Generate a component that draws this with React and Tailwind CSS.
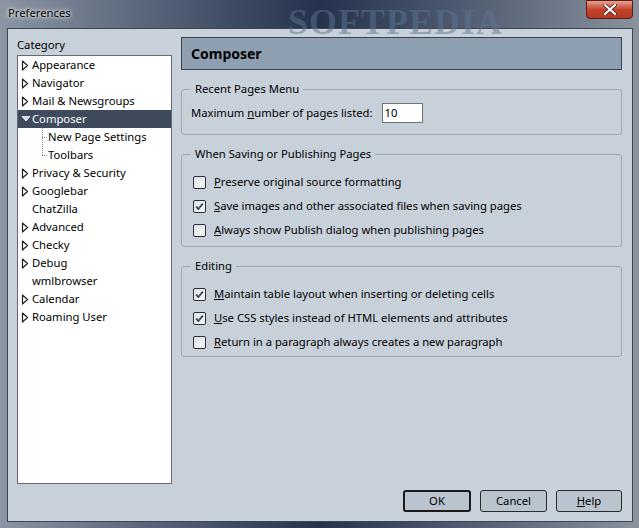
import React from "react";

const font = { fontFamily: '"Noto Sans", "Open Sans", sans-serif' };

function TriRight() {
  return (
    <svg width="8" height="11" viewBox="0 0 8 11" className="shrink-0">
      <path d="M1.5 1 L6.5 5.5 L1.5 10 Z" fill="white" stroke="#222" strokeWidth="1.2" strokeLinejoin="round" />
    </svg>
  );
}
function TriDown() {
  return (
    <svg width="10" height="8" viewBox="0 0 10 8" className="shrink-0">
      <path d="M1 1.5 L9 1.5 L5 6 Z" fill="#dfe3e8" stroke="#eef" strokeWidth="0.8" strokeLinejoin="round" />
    </svg>
  );
}

function TreeRow({ label, expand, selected }) {
  return (
    <div
      className={
        "flex items-center h-[18px] text-[11.25px] leading-[18px] " +
        (selected ? "bg-[#3f4b5c] text-white" : "text-black")
      }
    >
      <div className="w-[14px] pl-[3px] flex items-center">
        {expand === "right" && <TriRight />}
        {expand === "down" && <TriDown />}
      </div>
      <span>{label}</span>
    </div>
  );
}

function Check({ checked }) {
  return (
    <div className="w-[13px] h-[13px] border border-[#2c2f36] rounded-[2px] bg-gradient-to-br from-[#dfe4ea] to-[#f6f8fa] flex items-center justify-center shrink-0">
      {checked && (
        <svg width="9" height="9" viewBox="0 0 9 9">
          <path d="M1.2 4.6 L3.4 7 L7.8 1.6" fill="none" stroke="#3a3f48" strokeWidth="1.7" />
        </svg>
      )}
    </div>
  );
}

function CheckRow({ checked, first, rest }) {
  return (
    <div className="flex items-center h-[24px] pl-[11px] gap-[8px] text-[11.25px] text-black">
      <Check checked={checked} />
      <span>
        <span className="underline">{first}</span>
        {rest}
      </span>
    </div>
  );
}

function Group({ title, children, cls }) {
  return (
    <fieldset className={"border border-[#9ea7b2] rounded-[3px] px-0 " + cls}>
      <legend className="ml-[9px] px-[4px] text-[11.25px] leading-[16px] text-black">{title}</legend>
      {children}
    </fieldset>
  );
}

function Btn({ children, def, w }) {
  return (
    <div
      className={
        "h-[22px] rounded-[3px] bg-[#b9c4cf] flex items-center justify-center text-[11.25px] text-black " +
        (def ? "border-2 border-[#1a1a1a] " : "border border-[#2a2a2a] ") +
        w
      }
    >
      {children}
    </div>
  );
}

export default function App() {
  return (
    <div
      style={font}
      className="relative w-[639px] h-[528px] overflow-hidden flex flex-col bg-gradient-to-r from-[#8b95a3] via-[#24324c] to-[#8a929e]"
    >
      {/* title bar */}
      <div className="relative h-[28px] flex items-start shrink-0">
        <div className="absolute left-[288px] top-[-5px] text-[36px] font-bold text-[#5d7490] opacity-50 tracking-[1px] blur-[0.6px]" style={{ fontFamily: '"Liberation Serif", serif' }}>
          SOFTPEDIA
        </div>
        <div className="pl-[8px] pt-[5px] text-[11.25px] text-black [text-shadow:0_0_6px_#fff,0_0_3px_#fff]">Preferences</div>
        <div className="ml-auto mr-[6px] w-[47px] h-[19px] rounded-b-[4px] border border-[#5a1c14] bg-gradient-to-b from-[#e6a08f] via-[#c2432c] to-[#b53a22] flex items-center justify-center">
          <svg width="14" height="11" viewBox="0 0 14 11">
            <path d="M2 1 L12 10 M12 1 L2 10" stroke="#3a1510" strokeWidth="3.6" strokeLinecap="square" />
            <path d="M2 1 L12 10 M12 1 L2 10" stroke="white" strokeWidth="2.2" strokeLinecap="square" />
          </svg>
        </div>
      </div>

      {/* client area */}
      <div className="ml-[7px] w-[626px] h-[494px] border border-[#3f4753] bg-[#c8d0da] flex flex-col shrink-0">
        <div className="flex h-[455px]">
          {/* left column */}
          <div className="ml-[9px] w-[155px] flex flex-col">
            <div className="pt-[8px] h-[26px] text-[11.25px] leading-[16px] text-black">Category</div>
            <div className="flex-1 bg-white border border-[#646872] mt-0 h-[430px]">
              <TreeRow label="Appearance" expand="right" />
              <TreeRow label="Navigator" expand="right" />
              <TreeRow label="Mail & Newsgroups" expand="right" />
              <TreeRow label="Composer" expand="down" selected />
              <div className="relative">
                <div className="absolute left-[24px] top-0 h-[27px] border-l border-dotted border-[#888]" />
                <div className="flex items-center h-[18px] text-[11.25px]">
                  <div className="w-[24px]" />
                  <div className="w-[5px] border-t border-dotted border-[#888] mr-[1px]" />
                  <span>New Page Settings</span>
                </div>
                <div className="flex items-center h-[18px] text-[11.25px]">
                  <div className="w-[24px]" />
                  <div className="w-[5px] border-t border-dotted border-[#888] mr-[1px]" />
                  <span>Toolbars</span>
                </div>
              </div>
              <TreeRow label="Privacy & Security" expand="right" />
              <TreeRow label="Googlebar" expand="right" />
              <TreeRow label="ChatZilla" />
              <TreeRow label="Advanced" expand="right" />
              <TreeRow label="Checky" expand="right" />
              <TreeRow label="Debug" expand="right" />
              <TreeRow label="wmlbrowser" />
              <TreeRow label="Calendar" expand="right" />
              <TreeRow label="Roaming User" expand="right" />
            </div>
          </div>

          {/* right column */}
          <div className="ml-[9px] w-[441px] pt-[8px] flex flex-col">
            <div className="h-[33px] border border-[#3c4450] bg-[#8e9fb1] flex items-center pl-[9px] text-[14px] font-bold text-black">
              Composer
            </div>
            <Group title="Recent Pages Menu" cls="mt-[11px] h-[54px]">
              <div className="flex items-center h-[26px] pl-[9px] text-[11.25px] text-black mt-[3px]">
                <span>
                  Maximum <span className="underline">n</span>umber of pages listed:
                </span>
                <div className="ml-[9px] w-[41px] h-[20px] bg-white border border-[#6e737b] pl-[2px] text-[11.25px] leading-[18px]">10</div>
              </div>
            </Group>
            <Group title="When Saving or Publishing Pages" cls="mt-[11px] h-[101px]">
              <div className="pt-[8px]">
                <CheckRow first="P" rest="reserve original source formatting" />
                <CheckRow checked first="S" rest="ave images and other associated files when saving pages" />
                <CheckRow first="A" rest="lways show Publish dialog when publishing pages" />
              </div>
            </Group>
            <Group title="Editing" cls="mt-[11px] h-[99px]">
              <div className="pt-[8px]">
                <CheckRow checked first="M" rest="aintain table layout when inserting or deleting cells" />
                <CheckRow checked first="U" rest="se CSS styles instead of HTML elements and attributes" />
                <CheckRow first="R" rest="eturn in a paragraph always creates a new paragraph" />
              </div>
            </Group>
          </div>
        </div>
        {/* buttons */}
        <div className="flex justify-end gap-[9px] pr-[10px] mt-[6px]">
          <Btn def w="w-[68px]">OK</Btn>
          <Btn w="w-[67px]">Cancel</Btn>
          <Btn w="w-[66px]">
            <span><span className="underline">H</span>elp</span>
          </Btn>
        </div>
      </div>
    </div>
  );
}
